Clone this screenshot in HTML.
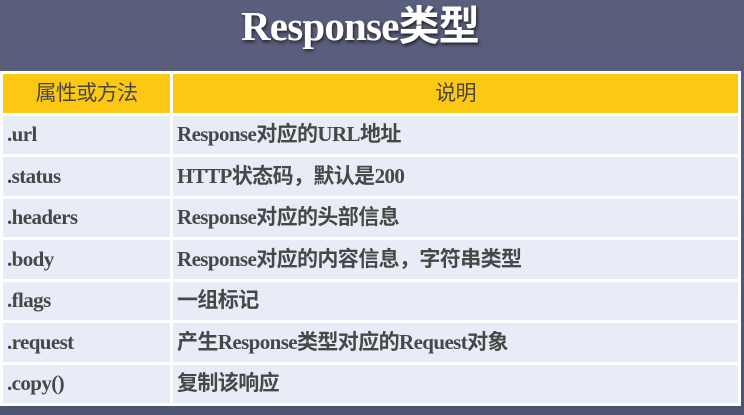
<!DOCTYPE html>
<html><head><meta charset="utf-8"><style>
html,body{margin:0;padding:0}
body{width:744px;height:415px;overflow:hidden;background:linear-gradient(#5a5f7e,#4e5372);position:relative;font-family:"Liberation Serif","Noto Sans CJK SC",serif}
.title{position:absolute;top:0px;left:-12px;width:744px;text-align:center;color:#fff;font-weight:bold;font-size:41px;line-height:52px;text-shadow:1px 2px 3px #222;letter-spacing:-0.8px}
table{position:absolute;left:0;top:71px;width:741px;border-collapse:collapse;background:#fff}
td,th{border:3px solid #fff;height:35px;line-height:35px;vertical-align:middle;padding:0 0 0 4px;font-size:21px;font-weight:bold;color:#474747;background:#e8ecf6;letter-spacing:-0.6px;white-space:nowrap}
tr{height:41.5px}
td:first-child{width:163px}
th{background:#fcc813;color:#474747;font-weight:normal;text-align:center;padding:0;font-size:21px;font-family:"Liberation Sans","Noto Sans CJK SC",sans-serif}
</style></head><body>
<div class="title">Response类型</div>
<table>
<tr><th>属性或方法</th><th>说明</th></tr>
<tr><td>.url</td><td>Response对应的URL地址</td></tr>
<tr><td>.status</td><td>HTTP状态码，默认是200</td></tr>
<tr><td>.headers</td><td>Response对应的头部信息</td></tr>
<tr><td>.body</td><td>Response对应的内容信息，字符串类型</td></tr>
<tr><td>.flags</td><td>一组标记</td></tr>
<tr><td>.request</td><td>产生Response类型对应的Request对象</td></tr>
<tr><td>.copy()</td><td>复制该响应</td></tr>
</table>
</body></html>
